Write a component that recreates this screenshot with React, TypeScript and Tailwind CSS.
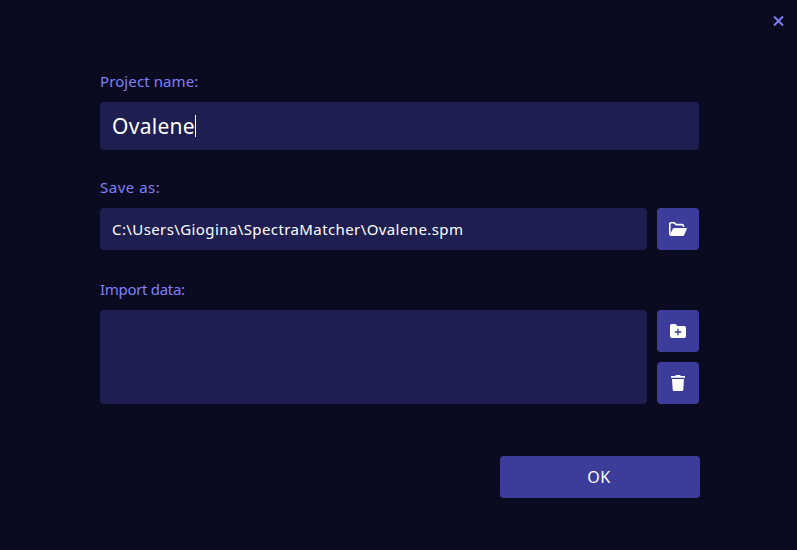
import React from "react";

function FolderOpenIcon() {
  return (
    <svg width="18" height="14" viewBox="0 0 18 14" className="block">
      <path d="M.8 12.5V1.8Q.8 .8 1.8 .8H5.3L7.2 2.6H13Q14.4 2.6 14.4 3.9V5" fill="none" stroke="white" strokeWidth="1.6" />
      <path d="M5.3 6H17.2Q18.3 6 17.8 7L15.2 12.9Q14.7 14 13.5 14H1.7Q.3 14 .8 12.8L3.8 6.9Q4.2 6 5.3 6Z" fill="white" />
    </svg>
  );
}

function FolderPlusIcon() {
  return (
    <svg width="16" height="14" viewBox="0 0 16 14" className="block">
      <path d="M1.8 0H5.5L7.5 2H14.2Q16 2 16 3.8V12.2Q16 14 14.2 14H1.8Q0 14 0 12.2V1.8Q0 0 1.8 0Z" fill="white" />
      <path d="M8 4.7V11.3M4.7 8H11.3" stroke="#3c3c9b" strokeWidth="1.4" />
    </svg>
  );
}

function TrashIcon() {
  return (
    <svg width="14" height="16" viewBox="0 0 14 16" className="block">
      <path d="M0 1H4L5 0H9L10 1H14V2.7H0ZM1 4H13L12.3 14.7Q12.2 16 10.9 16H3.1Q1.8 16 1.7 14.7Z" fill="white" />
    </svg>
  );
}

function IconButton({ label, children }: { label: string; children: React.ReactNode }) {
  return (
    <button aria-label={label} className="flex h-[42px] w-[42px] items-center justify-center rounded bg-[#3c3c9b]">
      {children}
    </button>
  );
}

export default function App() {
  return (
    <main className="flex h-[550px] w-[797px] flex-col bg-[#0a0a21] font-['Noto_Sans',sans-serif] text-white">
      <header className="flex h-[69px] justify-end pt-[15px] pr-[13px]">
        <button aria-label="Close" className="h-[11px] w-[11px]">
          <svg width="11" height="11" viewBox="0 0 11 11" className="block">
            <path d="M1 1.5L10 10.5M10 1.5L1 10.5" stroke="#7b7bf0" strokeWidth="2" />
          </svg>
        </button>
      </header>

      <section className="ml-[100px] w-[600px]">
        <label className="block h-[33px] text-[15px] leading-6 tracking-[0.1px] text-[#8080f8]">Project name:</label>
        <div className="flex h-12 w-[599px] items-center rounded bg-[#1e1e50] pl-3">
          <span className="text-[21px] leading-none tracking-[0.28px]">Ovalene</span>
          <span className="h-[22px] w-px bg-white" />
        </div>

        <label className="mt-[25px] block h-[33px] text-[15px] leading-6 tracking-[0.5px] text-[#8080f8]">Save as:</label>
        <div className="flex gap-2.5">
          <div className="flex h-[42px] w-[547px] items-center rounded bg-[#1e1e50] pl-3 text-[15px] tracking-[0.4px]">
            C:\Users\Giogina\SpectraMatcher\Ovalene.spm
          </div>
          <IconButton label="Browse"><FolderOpenIcon /></IconButton>
        </div>

        <label className="mt-[27px] block h-[33px] text-[15px] leading-6 tracking-[-0.3px] text-[#8080f8]">Import data:</label>
        <div className="flex gap-2.5">
          <div className="h-[94px] w-[547px] rounded bg-[#1e1e50]" />
          <div className="flex flex-col gap-2.5">
            <IconButton label="Add folder"><FolderPlusIcon /></IconButton>
            <IconButton label="Remove"><TrashIcon /></IconButton>
          </div>
        </div>

        <button className="mt-[52px] ml-[400px] flex h-[42px] w-[200px] items-center justify-center rounded bg-[#3c3c9b] pr-0.5 text-[16px] tracking-[0.5px]">OK</button>
      </section>
    </main>
  );
}
